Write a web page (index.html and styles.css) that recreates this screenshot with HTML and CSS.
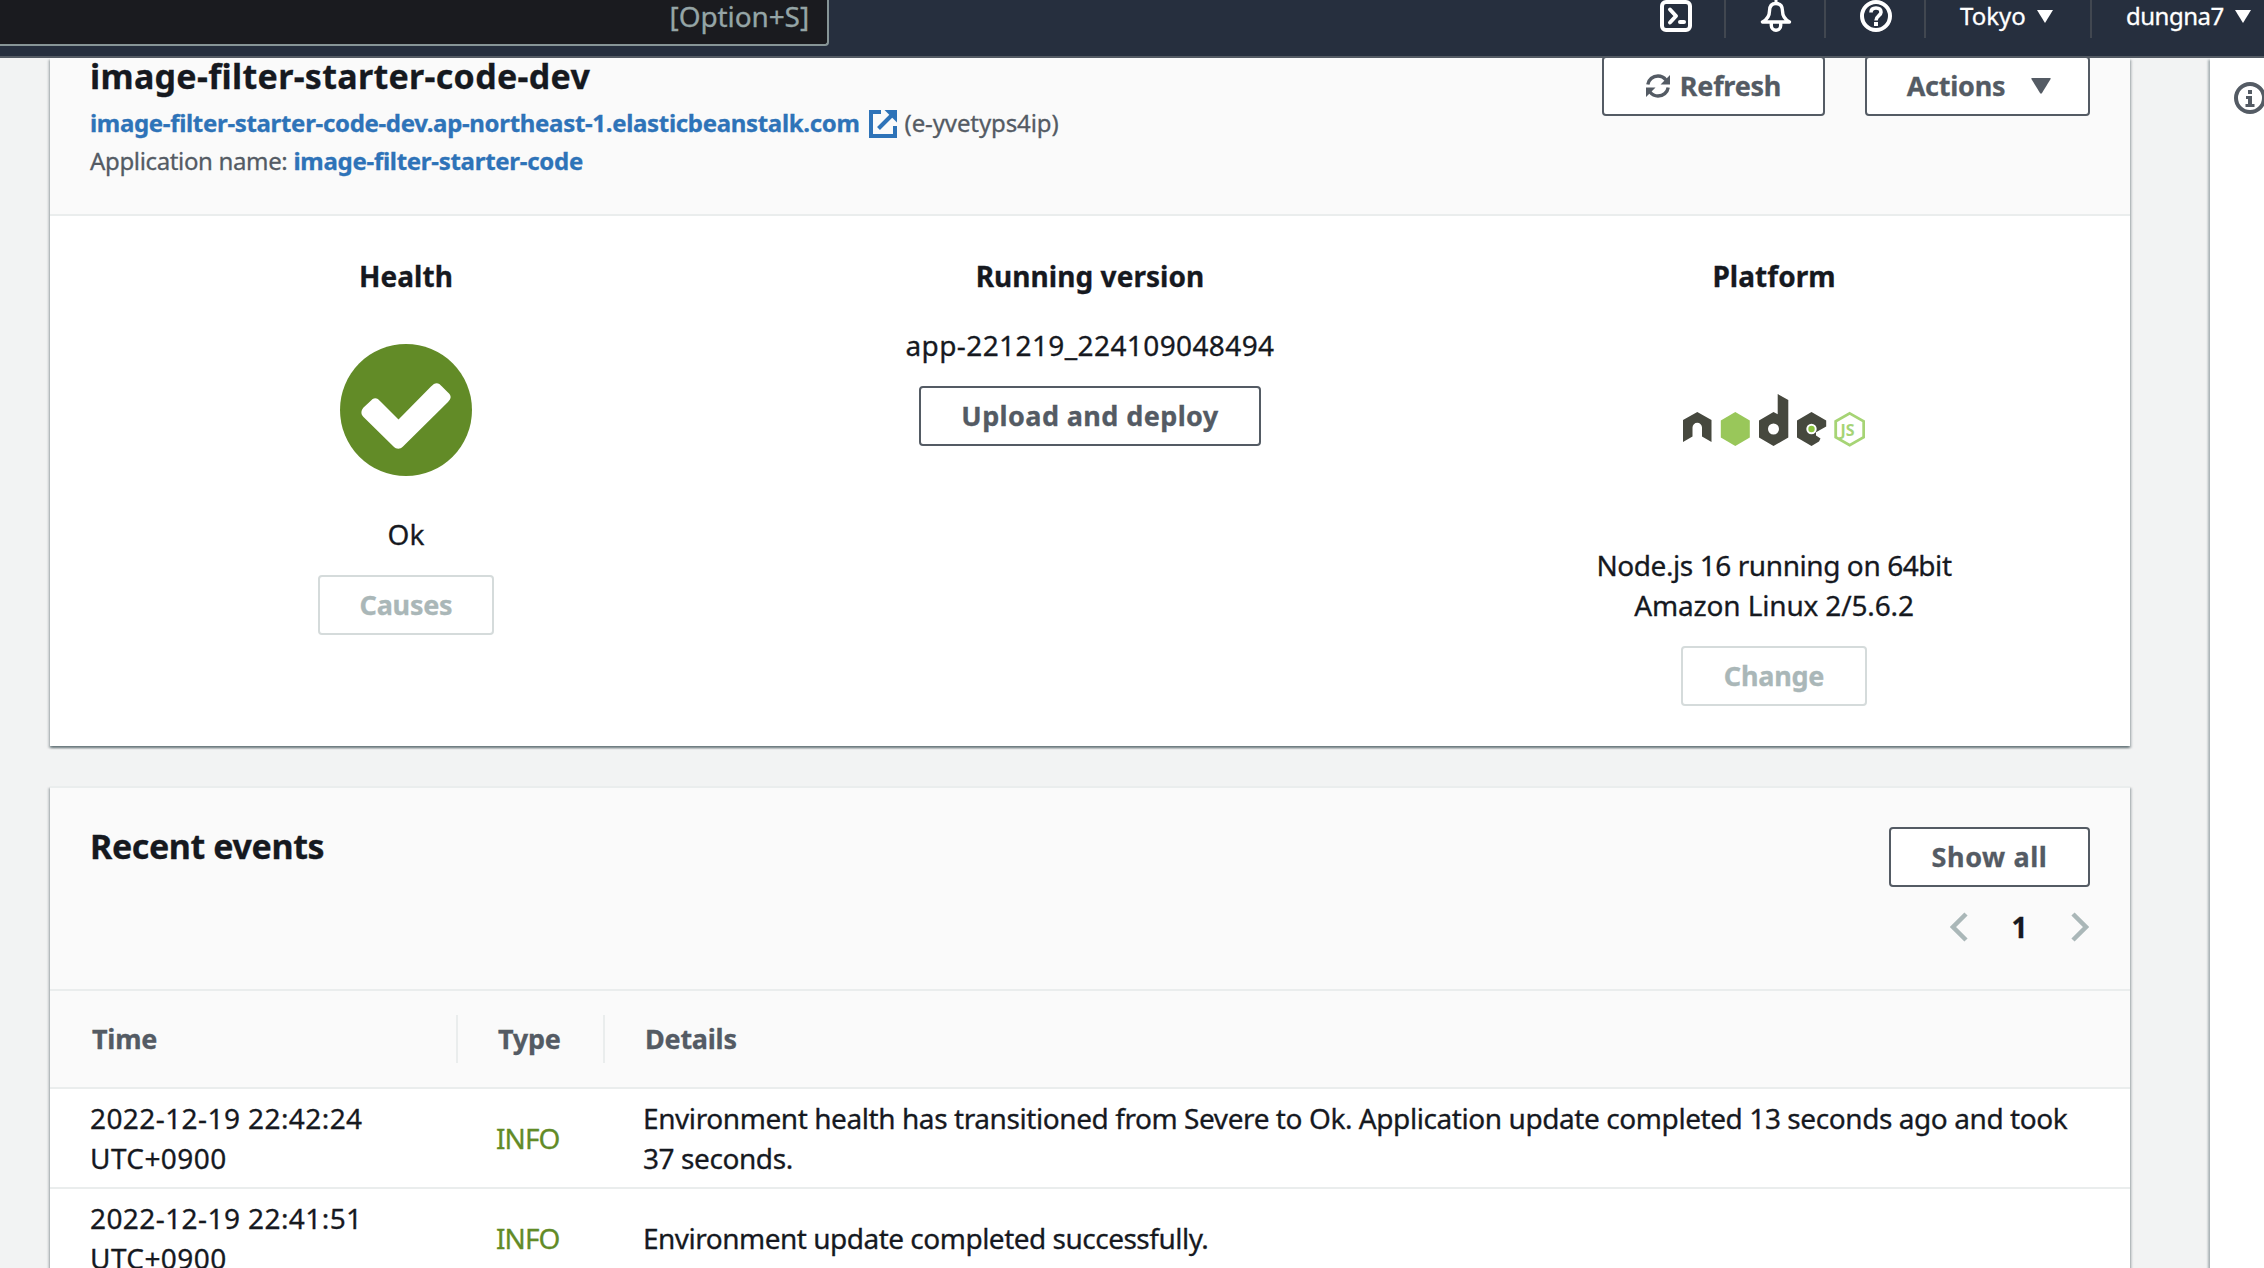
FILE: index.html
```
<!DOCTYPE html>
<html lang="en">
<head>
<meta charset="utf-8">
<title>image-filter-starter-code-dev</title>
<link rel="stylesheet" href="styles.css">
</head>
<body>
<header class="topbar">
  <div class="search"><span class="search-hint">[Option+S]</span></div>
  <nav class="topnav">
    <div class="nav-item nav-icon">
      <svg width="32" height="32" viewBox="0 0 32 32" fill="none" stroke="#fff" stroke-width="4"><rect x="2" y="2" width="28" height="28" rx="4"/><path d="M10 9.500l6 6.500-6 6.500" stroke-linecap="round" stroke-linejoin="round"/><path d="M20 22h4" stroke-linecap="round"/></svg>
    </div>
    <div class="nav-item nav-icon">
      <svg width="32" height="32" viewBox="0 0 32 32" fill="none" stroke="#fff" stroke-width="3.4" stroke-linejoin="round"><path d="M16 0v3" stroke-width="3"/><path d="M16 3.500c-4.500 0-6.500 3-6.500 7.500 0 5-1.500 8-7 11h27c-5.500-3-7-6-7-11 0-4.500-2-7.500-6.500-7.500z"/><path d="M11.300 23v2.500a4.700 4.700 0 0 0 9.400 0V23"/></svg>
    </div>
    <div class="nav-item nav-icon">
      <svg width="32" height="32" viewBox="0 0 32 32" fill="none" stroke="#fff" stroke-width="4"><circle cx="16" cy="16" r="14"/><path d="M11 12.500c0-3 2-4.500 5-4.500s5 1.500 5 4.200c0 3.300-5 3.600-5 8.300" stroke-width="3.600"/><path d="M16 22v4"/></svg>
    </div>
    <div class="nav-item nav-region">Tokyo<svg class="nav-caret" width="16" height="13" viewBox="0 0 16 13"><path d="M0 0h16L8 13z" fill="#fff"/></svg></div>
    <div class="nav-item nav-user"><span class="user-name">dungna7</span><svg class="nav-caret" width="16" height="13" viewBox="0 0 16 13"><path d="M0 0h16L8 13z" fill="#fff"/></svg></div>
  </nav>
</header>
<div class="page">
  <main class="content">
    <section class="panel">
      <div class="env-header">
        <div>
          <h1 class="env-title">image-filter-starter-code-dev</h1>
          <div class="env-line"><a class="link">image-filter-starter-code-dev.ap-northeast-1.elasticbeanstalk.com</a><svg class="ext-icon" width="28" height="28" viewBox="0 0 28 28" fill="none" stroke="#2e73b8" stroke-width="4"><path d="M12 2H2v24h24V16"/><path d="M9.500 18.500L24 4"/><path d="M15.500 0H28v12.500z" fill="#2e73b8" stroke="none"/></svg><span class="env-id">(e-yvetyps4ip)</span></div>
          <div class="env-line"><span class="app-label">Application name:</span><a class="link app-link">image-filter-starter-code</a></div>
        </div>
        <div class="env-actions">
          <button class="btn btn-refresh"><svg width="24" height="24" viewBox="0 0 24 24"><g fill="none" stroke="#545b64" stroke-width="3.400"><path d="M1.800 10.500C2.600 5.500 6.800 2 12 2c3.400 0 6 1.400 8 4"/><path d="M22.200 13.500C21.400 18.500 17.200 22 12 22c-3.400 0-6-1.400-8-4"/></g><path d="M24 1v9.500h-9.500zM0 23v-9.500h9.500z" fill="#545b64"/></svg>Refresh</button>
          <button class="btn btn-actions">Actions<svg width="20" height="16" viewBox="0 0 20 16"><path d="M1 0h18q1 0 .6 1L11 15q-1 1.500-2 0L.4 1Q0 0 1 0z" fill="#545b64"/></svg></button>
        </div>
      </div>
      <div class="overview">
        <div class="overview-col">
          <h2 class="col-title">Health</h2>
          <svg class="health-icon" width="132" height="132" viewBox="0 0 132 132"><circle cx="66" cy="66" r="66" fill="#628b27"/><path d="M58.500 75.500L91 42.500c4-4.500 7.500-4.500 11 0l6 6c4 3.500 3 6.500 0 9.500L63 102.500c-3 3-6.500 3-9.500 0L23.500 73c-3-3-2.500-6.500 0-9.500l6.500-6c3.500-4.500 7-4.500 10.500 0z" fill="#fff"/></svg>
          <p class="text">Ok</p>
          <button class="btn btn-disabled btn-causes">Causes</button>
        </div>
        <div class="overview-col">
          <h2 class="col-title">Running version</h2>
          <p class="text version">app-221219_224109048494</p>
          <button class="btn btn-upload">Upload and deploy</button>
        </div>
        <div class="overview-col">
          <h2 class="col-title">Platform</h2>
          <svg class="node-logo" width="182" height="54" viewBox="0 0 182 54">
            <path d="M0 26l14.300-8 14.200 8v22L19 42.500V33.500a4.700 4.700 0 0 0-9.500 0v9L0 48z" fill="#46483e"/>
            <path d="M52.300 18l14.500 8.400v17.200L52.300 52l-14.500-8.400V26.400z" fill="#99c75a"/>
            <path d="M94.700 0l10.600 6v37.600L90.500 52 76 43.600V26.400L90.500 18l4.200 2.300zM90.500 29.500a5.500 5.500 0 1 0 0 11 5.500 5.500 0 0 0 0-11z" fill-rule="evenodd" fill="#46483e"/>
            <path d="M128.500 18l14.700 8.400v6L133 38.300v3.200l4.500 3-1.500 3-7.500 4.500L114 43.600V26.400z" fill="#46483e"/>
            <circle cx="128.500" cy="35" r="5.200" fill="#fff"/><circle cx="128.500" cy="35" r="3.200" fill="#8cc540"/>
            <path d="M166.700 19.400l14 8v15.800l-14 8-14-8V27.400z" fill="none" stroke="#a6d475" stroke-width="2.800"/>
            <text x="157.500" y="41.500" class="logo-js">JS</text>
          </svg>
          <p class="text platform">Node.js 16 running on 64bit<br><span class="platform-os">Amazon Linux 2/5.6.2</span></p>
          <button class="btn btn-disabled btn-change">Change</button>
        </div>
      </div>
    </section>
    <section class="panel events">
      <div class="events-header">
        <h2 class="events-title">Recent events</h2>
        <div class="events-tools">
          <button class="btn btn-show">Show all</button>
          <div class="pager">
            <svg width="18" height="30" viewBox="0 0 18 30"><path d="M16 2L3 15l13 13" fill="none" stroke="#aab7b8" stroke-width="4.500"/></svg>
            <span class="page-num">1</span>
            <svg width="18" height="30" viewBox="0 0 18 30"><path d="M2 2l13 13L2 28" fill="none" stroke="#aab7b8" stroke-width="4.500"/></svg>
          </div>
        </div>
      </div>
      <div class="row row-head">
        <div class="th th-time">Time</div>
        <div class="th th-type">Type</div>
        <div class="th th-details">Details</div>
      </div>
      <div class="row">
        <div class="td time">2022-12-19 22:42:24<br>UTC+0900</div>
        <div class="td type">INFO</div>
        <div class="td details">Environment health has transitioned from Severe to Ok. Application update completed 13 seconds ago and took 37 seconds.</div>
      </div>
      <div class="row">
        <div class="td time">2022-12-19 22:41:51<br>UTC+0900</div>
        <div class="td type">INFO</div>
        <div class="td details details-short">Environment update completed successfully.</div>
      </div>
    </section>
  </main>
  <aside class="info-rail">
    <svg width="32" height="32" viewBox="0 0 32 32"><circle cx="16" cy="16" r="14" fill="none" stroke="#545b64" stroke-width="4"/><path d="M14 8h4v4h-4zM12 14h6v8h2.500v3h-9v-3H14v-5h-2z" fill="#545b64"/></svg>
  </aside>
</div>
</body>
</html>
```
FILE: styles.css
```
* { box-sizing: border-box; }
body {
  margin: 0;
  height: 1268px;
  overflow: hidden;
  display: flex;
  flex-direction: column;
  background: #f2f3f3;
  color: #16191f;
  font: 28px/40px "Noto Sans", sans-serif;
  -webkit-text-stroke: 0.3px;
}
h1, h2, p { margin: 0; }
svg { flex: none; }

.topbar {
  position: relative;
  z-index: 1;
  flex: none;
  display: flex;
  justify-content: space-between;
  align-items: flex-start;
  height: 58px;
  background: #262f3e;
  border-bottom: 2px solid #545b64;
}
.search {
  width: 829px;
  height: 46px;
  padding: 0 18px 0 0;
  text-align: right;
  line-height: 32px;
  background: #1a1b1f;
  border: 2px solid #879596;
  border-width: 0 2px 2px 0;
  border-radius: 0 0 4px 0;
  color: #95a5a6;
}
.search-hint { letter-spacing: -0.1px; }
.topnav { display: flex; color: #fff; font-size: 24px; line-height: 32px; }
.nav-item { height: 38px; display: flex; border-right: 2px solid #414750; }
.nav-icon { width: 100px; padding-left: 34px; }
.nav-region { width: 166px; padding-left: 34px; }
.nav-user { width: 172px; padding-left: 34px; border: 0; }
.nav-caret { margin: 10px 0 0 11px; }
.user-name { letter-spacing: -0.5px; }

.page { flex: 1; min-height: 0; display: flex; }
.content { flex: 1; padding: 0 80px 0 50px; }
.info-rail {
  width: 54px;
  padding: 24px 0 0 24px;
  background: #fff;
  box-shadow: -2px 2px 2px rgba(0, 28, 36, .3);
}
.info-rail svg { display: block; }

.panel {
  background: #fff;
  box-shadow: 0 2px 2px rgba(0, 28, 36, .4), 2px 2px 2px rgba(0, 28, 36, .15), -2px 2px 2px rgba(0, 28, 36, .15);
}
.env-header {
  height: 158px;
  display: flex;
  justify-content: space-between;
  padding: 0 40px;
  background: #fafafa;
  border-bottom: 2px solid #eaeded;
}
.env-title { margin-bottom: 10px; font-size: 34px; line-height: 36px; letter-spacing: 0.3px; }
.env-line { display: flex; height: 38px; font-size: 24px; line-height: 38px; color: #545b64; }
.link { color: #2e73b8; font-weight: 700; letter-spacing: -0.32px; }
.ext-icon { margin: 6px 8px 0 9px; }
.env-id { letter-spacing: -0.1px; }
.app-label { letter-spacing: -0.35px; margin-right: 6px; }
.app-link { letter-spacing: -0.28px; }
.env-actions { display: flex; gap: 40px; margin-top: -2px; }

.btn {
  display: flex;
  align-items: center;
  justify-content: center;
  height: 60px;
  padding: 0 0 1px;
  background: #fff;
  border: 2px solid #545b64;
  border-radius: 4px;
  color: #545b64;
  font: 700 27px/40px "Noto Sans", sans-serif;
  letter-spacing: -0.25px;
}
.btn-refresh { width: 223px; gap: 10px; }
.btn-actions { width: 225px; gap: 26px; padding-left: 3px; }
.btn-upload { width: 342px; letter-spacing: 0.4px; }
.btn-causes { width: 176px; }
.btn-change { width: 186px; }
.btn-show { width: 201px; letter-spacing: 0.6px; }
.btn-disabled { color: #aab7b8; border-color: #d5dbdb; }

.overview { display: flex; height: 530px; padding: 40px 14px 0; }
.overview-col { flex: 1; display: flex; flex-direction: column; align-items: center; text-align: center; }
.col-title { font-size: 28px; letter-spacing: 0.05px; }
.health-icon { margin: 48px 0 38px; }
.overview .btn { margin-top: 21px; }
.version { margin-top: 29px; letter-spacing: 0.4px; }
.node-logo { margin: 98px 0 97px; }
.logo-js { font: 700 16px "Noto Sans", sans-serif; fill: #a6d475; }
.platform { letter-spacing: -0.42px; }
.platform-os { letter-spacing: -0.15px; }

.events { margin-top: 40px; border-top: 2px solid #eaeded; }
.events-header {
  display: flex;
  justify-content: space-between;
  height: 203px;
  padding: 39px 40px 0;
  background: #fafafa;
  border-bottom: 2px solid #eaeded;
}
.events-title { margin-top: -3px; font-size: 34px; line-height: 44px; letter-spacing: -0.4px; }
.events-tools { display: flex; flex-direction: column; align-items: flex-end; }
.pager { display: flex; width: 139px; height: 30px; margin: 25px 1px 0 0; justify-content: space-between; align-items: center; }
.page-num { font-weight: 700; line-height: 30px; }

.row {
  display: grid;
  grid-template-columns: 408px 147px 1fr;
  align-items: center;
  height: 100px;
  border-bottom: 2px solid #eaeded;
}
.row-head { height: 98px; background: #fafafa; }
.th {
  height: 48px;
  border-right: 2px solid #eaeded;
  font-size: 27px;
  font-weight: 700;
  line-height: 48px;
  letter-spacing: -0.25px;
  color: #545b64;
}
.th-time { padding-left: 42px; }
.th-type { padding-left: 40px; }
.th-details { padding-left: 40px; border: 0; }
.time { padding-left: 40px; letter-spacing: 0.42px; }
.type { padding-left: 38px; letter-spacing: -0.9px; color: #628b27; }
.details { padding: 0 45px 0 38px; letter-spacing: -0.42px; }
.details-short { letter-spacing: -0.5px; }
```
